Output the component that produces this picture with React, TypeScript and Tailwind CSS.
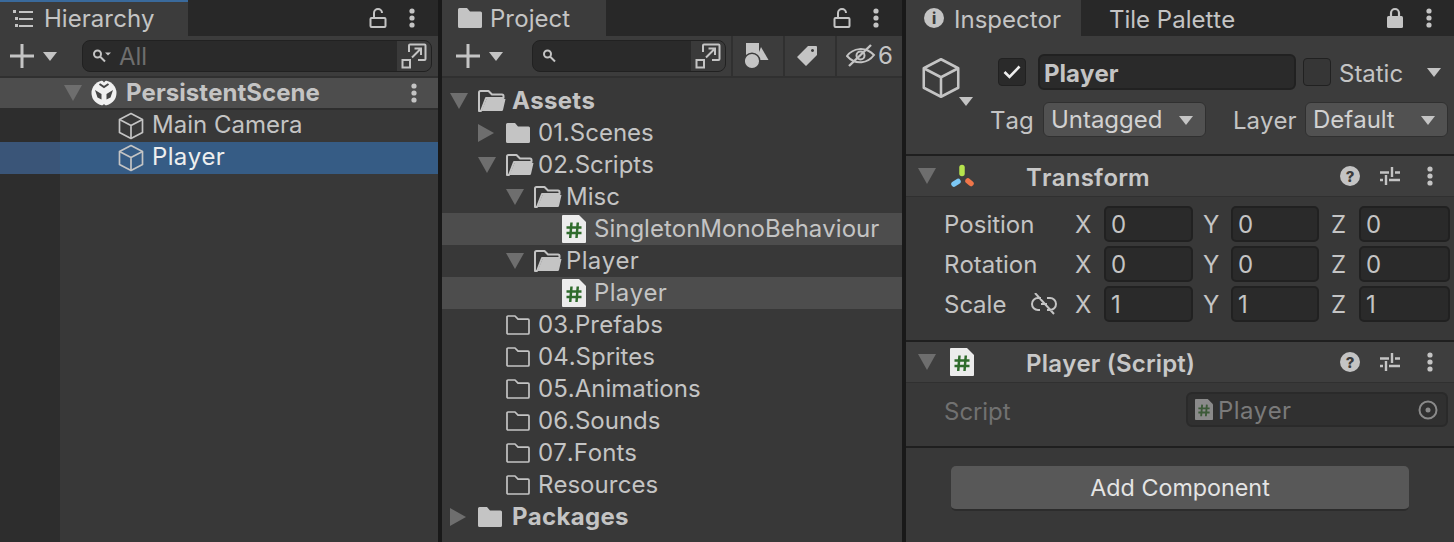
import React from "react";

const C = "#c4c4c4";

function Kebab({ color = C }: { color?: string }) {
  return (
    <svg width="8" height="20" viewBox="0 0 8 20" className="shrink-0">
      <circle cx="4" cy="3" r="2.6" fill={color} />
      <circle cx="4" cy="10" r="2.6" fill={color} />
      <circle cx="4" cy="17" r="2.6" fill={color} />
    </svg>
  );
}
function LockOpen() {
  return (
    <svg width="18" height="22" viewBox="0 0 18 22" className="shrink-0" fill="none" stroke={C} strokeWidth="2">
      <rect x="1.5" y="11" width="15" height="9" rx="1" />
      <path d="M5 11V6a4 4 0 0 1 8 0" />
    </svg>
  );
}
function LockClosed() {
  return (
    <svg width="18" height="22" viewBox="0 0 18 22" className="shrink-0" fill="none">
      <rect x="1" y="9" width="16" height="12" rx="1.5" fill={C} />
      <path d="M5 10V6a4 4 0 0 1 8 0v4" stroke={C} strokeWidth="2.2" />
    </svg>
  );
}
function Plus() {
  return (
    <svg width="24" height="24" viewBox="0 0 24 24" className="shrink-0">
      <path d="M10.5 0h3v10.5H24v3H13.5V24h-3V13.5H0v-3h10.5z" fill={C} />
    </svg>
  );
}
function Tri({ dir = "down", w = 14, h = 9, color = C }: { dir?: "down" | "right"; w?: number; h?: number; color?: string }) {
  return (
    <svg width={w} height={h} viewBox={`0 0 ${w} ${h}`} className="shrink-0">
      <path d={dir === "down" ? `M0 0H${w}L${w / 2} ${h}Z` : `M0 0L${w} ${h / 2}L0 ${h}Z`} fill={color} />
    </svg>
  );
}
function Fold({ dir = "down" }: { dir?: "down" | "right" }) {
  return dir === "down" ? <Tri w={18} h={16} color="#6e6e6e" /> : <Tri dir="right" w={16} h={18} color="#6e6e6e" />;
}
function Search({ drop = false }: { drop?: boolean }) {
  return (
    <svg width="20" height="16" viewBox="0 0 20 16" className="shrink-0" fill="none" stroke={C} strokeWidth="2">
      <circle cx="5.5" cy="6" r="3.5" />
      <path d="M8 8.5l5 5" />
      {drop && <path d="M13 4.5h6l-3 3z" fill={C} stroke="none" />}
    </svg>
  );
}
function ExpandBtn() {
  return (
    <div className="w-[34px] h-[30px] bg-[#3a3a3a] flex items-center justify-center shrink-0 rounded-r-[7px]">
      <svg width="26" height="26" viewBox="0 0 26 26" fill="none" stroke={C} strokeWidth="2">
        <path d="M8 9V2.5a1 1 0 0 1 1-1h14.5a1 1 0 0 1 1 1V16a1 1 0 0 1-1 1H17" />
        <rect x="1.5" y="17" width="7.5" height="7.5" />
        <path d="M11 14.5l9-9M13.5 5.5H20V12" />
      </svg>
    </div>
  );
}
function Cube({ size = 28 }: { size?: number }) {
  return (
    <svg width={size} height={size} viewBox="0 0 28 28" className="shrink-0" fill="none" stroke={C} strokeWidth="1.7" strokeLinejoin="round">
      <path d="M14 1.5L25.5 7.5V20.5L14 26.5L2.5 20.5V7.5Z" />
      <path d="M2.5 7.5L14 13.5L25.5 7.5M14 13.5V26.5" />
    </svg>
  );
}
function FolderOpen() {
  return (
    <svg width="28" height="22" viewBox="0 0 28 22" className="shrink-0">
      <path d="M1 21V2.5A1.5 1.5 0 0 1 2.5 1h8L14 4.5h10A1.5 1.5 0 0 1 25.5 6v2H8L3 21Z" fill="none" stroke={C} strokeWidth="2" strokeLinejoin="round" />
      <path d="M8.5 9H27.5L25 20a1.3 1.3 0 0 1-1.3 1H3.5Z" fill={C} />
    </svg>
  );
}
function FolderFilled({ w = 24, h = 20 }: { w?: number; h?: number }) {
  return (
    <svg width={w} height={h} viewBox="0 0 24 20" className="shrink-0">
      <path d="M0 1.5A1.5 1.5 0 0 1 1.5 0h7.5l3 3.5h10.5A1.5 1.5 0 0 1 24 5v13.5a1.5 1.5 0 0 1-1.5 1.5h-21A1.5 1.5 0 0 1 0 18.5Z" fill={C} />
    </svg>
  );
}
function FolderOutline() {
  return (
    <svg width="24" height="20" viewBox="0 0 24 20" className="shrink-0" fill="none" stroke={C} strokeWidth="1.7" strokeLinejoin="round">
      <path d="M1 2A1 1 0 0 1 2 1h7l3 3.2h10A1 1 0 0 1 23 5.2V18a1 1 0 0 1-1 1H2a1 1 0 0 1-1-1Z" />
    </svg>
  );
}
function ScriptIcon({ w = 24, h = 28, dim = false }: { w?: number; h?: number; dim?: boolean }) {
  return (
    <svg width={w} height={h} viewBox="0 0 24 28" className="shrink-0">
      <path d="M0 1a1 1 0 0 1 1-1h16l7 7v20a1 1 0 0 1-1 1H1a1 1 0 0 1-1-1Z" fill={dim ? "#8a8a8a" : "#ececec"} />
      <path d="M9.5 7.5L8.2 23M15.8 7.5L14.5 23M4.5 12.5h15M4.5 18h15" stroke={dim ? "#3c5a38" : "#2f6b2c"} strokeWidth="2.5" fill="none" />
    </svg>
  );
}
function UnityScene() {
  return (
    <svg width="26" height="28" viewBox="0 0 26 28" className="shrink-0">
      <circle cx="13" cy="14" r="12.5" fill="#f0f0f0" />
      <path d="M4 11L10.5 15V20.5L6.5 18.5Z M22 11L15.5 15V20.5L19.5 18.5Z" fill="#454545" />
      <path d="M10 0L13 3.5L16 0Z M10 28L13 25L16 28Z" fill="#4d4d4d" />
      <path d="M8.5 5L13 8L17.5 5" stroke="#454545" strokeWidth="2" fill="none" />
    </svg>
  );
}
function Sliders() {
  return (
    <svg width="20" height="20" viewBox="0 0 20 20" className="shrink-0" stroke={C} strokeWidth="2.4" fill="none">
      <path d="M0 6.5h9M15 6.5h5M12 1v10M0 14h3M9 14h11M6 9v10" />
    </svg>
  );
}
function Help() {
  return (
    <div className="w-5 h-5 rounded-full bg-[#c4c4c4] flex items-center justify-center text-[#3c3c3c] text-[15px] font-extrabold leading-none shrink-0">?</div>
  );
}
function ComponentHeader({ icon, title }: { icon: React.ReactNode; title: string }) {
  return (
    <div className="h-10 bg-[#3e3e3e] flex items-center pl-3 pr-[20px] border-b border-[#303030] box-content shrink-0">
      <Fold />
      <div className="w-[60px] ml-[14px] shrink-0 flex items-center">{icon}</div>
      <div className="font-semibold text-[24px] text-[#c8c8c8] ml-4 pt-1 flex-1 tracking-[0.2px]">{title}</div>
      <div className="flex items-center">
        <Help />
        <div className="ml-5 mr-[26px]">
          <Sliders />
        </div>
        <Kebab />
      </div>
    </div>
  );
}
function NumField({ label, value, w, labelW }: { label: string; value: string; w: number; labelW: number }) {
  return (
    <div className="flex items-center shrink-0">
      <span className="text-[24px] pt-0.5" style={{ width: labelW }}>{label}</span>
      <div className="h-9 bg-[#2a2a2a] border-2 border-[#212121] rounded-[5px] pl-[5px] pt-0.5 text-[24px] leading-8 flex items-center" style={{ width: w }}>
        {value}
      </div>
    </div>
  );
}
function VecRow({ label, link, x, y, z }: { label: string; link?: boolean; x: string; y: string; z: string }) {
  return (
    <div className="h-9 flex items-center">
      <div className="w-[131px] ml-[38px] pr-[18px] shrink-0 flex items-center justify-between text-[24px]">
        <span className="pt-0.5">{label}</span>
        {link && (
          <svg width="26" height="22" viewBox="0 0 26 22" fill="none" stroke={C} strokeWidth="2">
            <path d="M10 5H7a6 6 0 0 0 0 12h2M16 5h3a6 6 0 0 1 0 12h-3M10 11h6M4 0l19 21" />
          </svg>
        )}
      </div>
      <NumField label="X" value={x} w={89} labelW={29} />
      <div className="ml-[10px]">
        <NumField label="Y" value={y} w={88} labelW={28} />
      </div>
      <div className="ml-[12px]">
        <NumField label="Z" value={z} w={91} labelW={28} />
      </div>
    </div>
  );
}
function ProjRow({ indent, fold, icon, text, bold, hi }: { indent: number; fold?: "down" | "right"; icon: React.ReactNode; text: string; bold?: boolean; hi?: boolean }) {
  return (
    <div className={`h-8 flex items-center ${hi ? "bg-[#4d4d4d]" : ""}`} style={{ paddingLeft: indent }}>
      <div className="w-[28px] flex items-center shrink-0">{fold && <Fold dir={fold} />}</div>
      <div className="w-[32px] flex items-center shrink-0">{icon}</div>
      <span className={`text-[24px] whitespace-nowrap ${bold ? "font-bold tracking-[0.3px] ml-0.5" : ""} ${text === "Player" ? "tracking-[0.35px]" : ""}`}>{text}</span>
    </div>
  );
}

export default function App() {
  return (
    <div
      className="w-[1454px] h-[542px] bg-[#191919] flex overflow-hidden text-[#c4c4c4] [font-kerning:none]"
      style={{ fontFamily: "Inter, 'Liberation Sans', sans-serif" }}
    >
      {/* Hierarchy */}
      <div className="w-[438px] shrink-0 flex flex-col bg-[#383838]">
        <div className="h-9 bg-[#282828] flex items-center shrink-0">
          <div className="w-[188px] h-9 bg-[#3c3c3c] border-t-2 border-[#3a6a9c] flex items-center pl-[13px] gap-[9px]">
            <svg width="22" height="18" viewBox="0 0 22 18" fill="#c4c4c4" className="shrink-0">
              <rect x="0" y="0" width="3" height="3" />
              <rect x="2" y="7" width="3" height="3" />
              <rect x="2" y="14" width="3" height="3" />
              <rect x="6" y="1" width="14" height="2" />
              <rect x="6" y="8" width="14" height="2" />
              <rect x="6" y="15" width="14" height="2" />
            </svg>
            <span className="text-[24px]">Hierarchy</span>
          </div>
          <div className="flex-1" />
          <LockOpen />
          <div className="ml-[21px] mr-[22px]">
            <Kebab />
          </div>
        </div>
        <div className="h-[42px] bg-[#3c3c3c] border-b-2 border-[#303030] flex items-center pl-[10px] pr-[6px] shrink-0">
          <Plus />
          <div className="ml-[9px]">
            <Tri />
          </div>
          <div className="ml-[25px] flex-1 h-[32px] bg-[#2a2a2a] border border-[#212121] rounded-[8px] flex items-center pl-[9px]">
            <Search drop />
            <span className="ml-[7px] pt-0.5 text-[24px] text-[#6e6e6e]">All</span>
            <div className="flex-1" />
            <ExpandBtn />
          </div>
        </div>
        <div className="h-[32px] bg-[#4d4d4d] border-b-2 border-[#2e2e2e] flex items-center pl-[64px] pr-[20px] shrink-0">
          <Fold />
          <div className="ml-[9px] w-[35px]">
            <UnityScene />
          </div>
          <span className="font-bold text-[24px] flex-1 tracking-[0.05px]">PersistentScene</span>
          <Kebab />
        </div>
        <div className="flex flex-1 min-h-0 flex-col bg-[linear-gradient(90deg,#2d2d2d_60px,#383838_60px)]">
          <div className="h-8 flex items-center pl-[117px] gap-[7px]">
            <Cube />
            <span className="text-[24px] pb-0.5">Main Camera</span>
          </div>
          <div className="h-8 flex items-center pl-[117px] gap-[7px] bg-[linear-gradient(90deg,#3a5578_60px,#365c85_60px)]">
            <Cube />
            <span className="text-[24px] pb-0.5 text-[#eeeeee] tracking-[0.35px]">Player</span>
          </div>
        </div>
      </div>
      <div className="w-1 shrink-0" />

      {/* Project */}
      <div className="w-[460px] shrink-0 flex flex-col bg-[#383838]">
        <div className="h-9 bg-[#282828] flex items-center shrink-0">
          <div className="w-[164px] h-9 bg-[#3c3c3c] flex items-center pl-[16px] gap-[8px]">
            <FolderFilled />
            <span className="text-[24px] pt-0.5">Project</span>
          </div>
          <div className="flex-1" />
          <LockOpen />
          <div className="ml-[21px] mr-[22px]">
            <Kebab />
          </div>
        </div>
        <div className="h-[42px] bg-[#3c3c3c] border-b-2 border-[#303030] flex items-center pl-[14px] shrink-0">
          <Plus />
          <div className="ml-[9px]">
            <Tri />
          </div>
          <div className="ml-[29px] w-[194px] h-[32px] bg-[#2a2a2a] border border-[#212121] rounded-[8px] flex items-center pl-[9px] shrink-0">
            <Search />
            <div className="flex-1" />
            <ExpandBtn />
          </div>
          <div className="ml-[5px] h-10 w-[52px] border-l-2 border-[#303030] flex items-center justify-center">
            <svg width="26" height="26" viewBox="0 0 26 26" fill={C}>
              <rect x="1" y="0" width="13" height="13" />
              <path d="M16 4L23.5 17H11Z" />
              <circle cx="7" cy="18" r="7.8" stroke="#3c3c3c" strokeWidth="1.5" />
            </svg>
          </div>
          <div className="h-10 w-[52px] border-l-2 border-[#303030] flex items-center justify-center pr-[6px]">
            <svg width="22" height="22" viewBox="0 0 22 22">
              <path d="M12 1h8a1 1 0 0 1 1 1v8L10 21 1 12Z M16.5 4a1.5 1.5 0 1 0 .01 0Z" fill={C} fillRule="evenodd" />
            </svg>
          </div>
          <div className="h-10 flex-1 border-l-2 border-[#303030] flex items-center justify-center gap-[2px]">
            <svg width="30" height="24" viewBox="0 0 30 24" fill="none" stroke={C} strokeWidth="2">
              <path d="M1 12C7 4 19 2 28 11 22 19 10 22 1 12Z" />
              <circle cx="14.5" cy="11.5" r="4" />
              <path d="M3 22L25 1" strokeWidth="2.4" />
            </svg>
            <span className="text-[24px]">6</span>
          </div>
        </div>
        <div className="pt-[7px] flex flex-col">
          <ProjRow indent={8} fold="down" icon={<FolderOpen />} text="Assets" bold />
          <ProjRow indent={36} fold="right" icon={<FolderFilled />} text="01.Scenes" />
          <ProjRow indent={36} fold="down" icon={<FolderOpen />} text="02.Scripts" />
          <ProjRow indent={64} fold="down" icon={<FolderOpen />} text="Misc" />
          <ProjRow indent={92} icon={<ScriptIcon />} text="SingletonMonoBehaviour" hi />
          <ProjRow indent={64} fold="down" icon={<FolderOpen />} text="Player" />
          <ProjRow indent={92} icon={<ScriptIcon />} text="Player" hi />
          <ProjRow indent={36} icon={<FolderOutline />} text="03.Prefabs" />
          <ProjRow indent={36} icon={<FolderOutline />} text="04.Sprites" />
          <ProjRow indent={36} icon={<FolderOutline />} text="05.Animations" />
          <ProjRow indent={36} icon={<FolderOutline />} text="06.Sounds" />
          <ProjRow indent={36} icon={<FolderOutline />} text="07.Fonts" />
          <ProjRow indent={36} icon={<FolderOutline />} text="Resources" />
          <ProjRow indent={8} fold="right" icon={<FolderFilled />} text="Packages" bold />
        </div>
      </div>
      <div className="w-1 shrink-0" />

      {/* Inspector */}
      <div className="flex-1 min-w-0 flex flex-col bg-[#383838]">
        <div className="h-9 bg-[#282828] flex items-center shrink-0">
          <div className="w-[175px] h-9 bg-[#3c3c3c] flex items-center pl-[18px] gap-[10px] shrink-0">
            <div className="w-5 h-5 rounded-full bg-[#c4c4c4] flex items-center justify-center text-[#3c3c3c] text-[15px] font-extrabold leading-none shrink-0">i</div>
            <span className="text-[24px] pt-1">Inspector</span>
          </div>
          <span className="ml-[28px] pt-1 text-[24px]">Tile Palette</span>
          <div className="flex-1" />
          <LockClosed />
          <div className="ml-[21px] mr-[21px]">
            <Kebab />
          </div>
        </div>
        <div className="h-[118px] bg-[#3c3c3c] flex pl-[14px] shrink-0">
          <div className="relative w-[70px] pt-[21px] shrink-0">
            <Cube size={42} />
            <div className="absolute left-[39px] top-[61px]">
              <Tri />
            </div>
          </div>
          <div className="flex-1 min-w-0 flex flex-col">
            <div className="flex items-center h-9 mt-[18px]">
              <div className="ml-[8px] w-7 h-7 bg-[#2a2a2a] border border-[#212121] rounded-[4px] flex items-center justify-center shrink-0">
                <svg width="18" height="14" viewBox="0 0 18 14" fill="none" stroke="#eeeeee" strokeWidth="2.6">
                  <path d="M1.5 7l5 5L16.5 1.5" />
                </svg>
              </div>
              <div className="ml-[12px] w-[258px] h-9 bg-[#2a2a2a] border-2 border-[#212121] rounded-[6px] pl-[4px] pt-1 flex items-center font-bold text-[24px] shrink-0">
                Player
              </div>
              <div className="ml-[7px] w-7 h-7 bg-[#363636] border border-[#212121] rounded-[4px] shrink-0" />
              <span className="ml-[8px] pt-1 text-[24px]">Static</span>
              <div className="ml-[24px]">
                <Tri />
              </div>
            </div>
            <div className="flex items-center h-[36px] mt-[11px]">
              <span className="w-[53px] pt-1 text-[24px]">Tag</span>
              <div className="w-[163px] h-[35px] bg-[#515151] border border-[#303030] rounded-[6px] pl-[7px] pr-[12px] pt-0.5 flex items-center justify-between text-[24px] shrink-0">
                <span className="text-[#d2d2d2]">Untagged</span>
                <Tri />
              </div>
              <span className="ml-[27px] w-[72px] pt-1 text-[24px]">Layer</span>
              <div className="w-[143px] h-[35px] bg-[#515151] border border-[#303030] rounded-[6px] pl-[7px] pr-[12px] pt-0.5 flex items-center justify-between text-[24px] shrink-0">
                <span className="text-[#d2d2d2]">Default</span>
                <Tri />
              </div>
            </div>
          </div>
        </div>
        <div className="h-0.5 bg-[#1f1f1f] shrink-0" />
        <ComponentHeader
          title="Transform"
          icon={
            <svg width="28" height="26" viewBox="0 0 28 26" fill="none" strokeWidth="5.5" strokeLinecap="round">
              <path d="M12 4.5V10.5" stroke="#b6e34d" />
              <path d="M4 21L8 18.5" stroke="#7cc8f5" />
              <path d="M18 18L21 20.5" stroke="#f0764a" />
            </svg>
          }
        />
        <div className="h-[143px] flex flex-col pt-[9px] gap-1 shrink-0">
          <VecRow label="Position" x="0" y="0" z="0" />
          <VecRow label="Rotation" x="0" y="0" z="0" />
          <VecRow label="Scale" link x="1" y="1" z="1" />
        </div>
        <div className="h-0.5 bg-[#1f1f1f] shrink-0" />
        <ComponentHeader title="Player (Script)" icon={<ScriptIcon />} />
        <div className="h-[63px] flex items-start pt-[9px] pl-[38px] pr-[6px] shrink-0">
          <span className="text-[24px] text-[#717171] w-[242px] shrink-0 pt-0.5">Script</span>
          <div className="flex-1 h-[35px] bg-[#303030] border-2 border-[#2a2a2a] rounded-[6px] flex items-center pl-[7px] pr-[8px]">
            <ScriptIcon w={18} h={21} dim />
            <span className="ml-[5px] text-[24px] text-[#7a7a7a] flex-1 pt-0.5 tracking-[0.4px]">Player</span>
            <svg width="20" height="20" viewBox="0 0 20 20" fill="none" stroke="#8a8a8a" strokeWidth="2">
              <circle cx="10" cy="10" r="8.5" />
              <circle cx="10" cy="10" r="2.5" fill="#8a8a8a" stroke="none" />
            </svg>
          </div>
        </div>
        <div className="h-0.5 bg-[#1f1f1f] shrink-0" />
        <div className="flex justify-start pl-[45px] pt-[18px]">
          <div className="w-[458px] h-[45px] bg-[#585858] border-b-2 border-[#2c2c2c] rounded-[5px] pt-0.5 flex items-center justify-center text-[23.3px] text-[#e4e4e4]">
            Add Component
          </div>
        </div>
      </div>
    </div>
  );
}
